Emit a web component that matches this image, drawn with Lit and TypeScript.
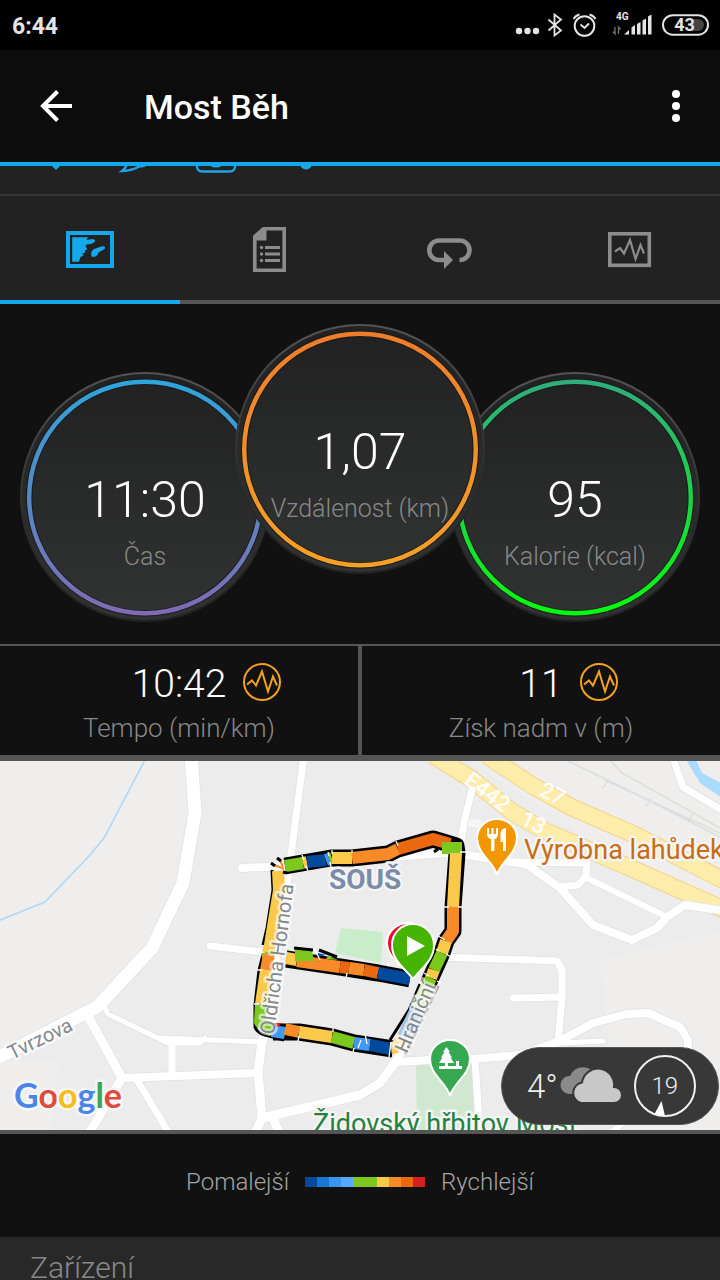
import { LitElement, html, svg, css } from "lit";
import { customElement, property, state } from "lit/decorators.js";
import { classMap } from "lit/directives/class-map.js";

const PULSE = "M0 9 L5 5 L9 10 L15 -4 L21 16 L26 1 L30 10";

@customElement("status-bar")
class StatusBar extends LitElement {
  static styles = css`
    :host {
      display: flex;
      align-items: center;
      height: 50px;
      padding: 0 11px 0 12px;
      background: #000;
      color: #e4e4e4;
      font-family: Roboto, sans-serif;
    }
    .time {
      flex: 1;
      padding-top: 3px;
      font-size: 23px;
      font-weight: 700;
      line-height: 47px;
    }
    svg { display: block; }
    .small { font: 700 10px Roboto, sans-serif; }
    .charge { font: 700 18px Roboto, sans-serif; }
  `;
  render() {
    return html`
      <span class="time">6:44</span>
      <svg width="194" height="50" viewBox="515 0 194 50" fill="none" stroke="#e4e4e4">
        <g fill="#e4e4e4" stroke="none">
          <circle cx="519" cy="31" r="3.2" /><circle cx="527.5" cy="31" r="3.2" /><circle cx="536" cy="31" r="3.2" />
        </g>
        <path d="M548.5 19.5 L561 30.5 L554.5 35.5 V14.5 L561 19.5 L548.5 30.5" stroke-width="1.8" />
        <circle cx="584.5" cy="26" r="9.8" stroke-width="2" />
        <path d="M580.5 24.5 L584.5 28 L589 23.5" stroke-width="2" />
        <path d="M573.5 19 Q575.5 15.5 579.5 14.5 M595.5 19 Q593.5 15.5 589.5 14.5" stroke-width="2" />
        <text class="small" x="616" y="20" fill="#e4e4e4" stroke="none">4G</text>
        <path d="M615 27 V34 L613 31.5 M618.5 34 V27 L620.5 29.5" stroke="#777" stroke-width="1.3" />
        <g fill="#e4e4e4" stroke="none">
          <path d="M624 34.5 L629 30 V34.5 Z" />
          <path d="M631.5 34.5 V27.5 L635 25 V34.5 Z M637 34.5 V24 L640.5 22 V34.5 Z M642.5 34.5 V20.5 L646 18.5 V34.5 Z M648 34.5 V16.5 L651.5 14.5 V34.5 Z" />
        </g>
        <path d="M692 19 H698 A6 6 0 0 1 698 31 H692 Z" fill="#444" stroke="none" />
        <rect x="663" y="15.2" width="45" height="19.5" rx="9.7" stroke-width="2" />
        <text class="charge" x="684.5" y="31" text-anchor="middle" fill="#e4e4e4" stroke="none">43</text>
      </svg>
    `;
  }
}

@customElement("top-bar")
class TopBar extends LitElement {
  @property() heading = "";
  static styles = css`
    :host {
      display: flex;
      align-items: center;
      height: 112px;
      padding: 0 16px;
      background: #0c0c0c;
      border-bottom: 4px solid #12a8ec;
      font-family: Roboto, sans-serif;
    }
    button {
      display: grid;
      place-items: center;
      height: 64px;
      padding: 0;
      border: 0;
      background: none;
    }
    .back { width: 80px; }
    .more { width: 56px; }
    h1 {
      flex: 1;
      margin: 0 0 0 48px;
      padding-top: 2px;
      color: #fff;
      font-size: 34px;
      font-weight: 500;
      line-height: 40px;
    }
  `;
  render() {
    return html`
      <button class="back" aria-label="Zpět">
        <svg width="32" height="32" viewBox="0 0 32 32" fill="none" stroke="#fff" stroke-width="4">
          <path d="M32 16 H3 M17.5 1.5 L3 16 L17.5 30.5" />
        </svg>
      </button>
      <h1>${this.heading}</h1>
      <button class="more" aria-label="Další možnosti">
        <svg width="8" height="32" viewBox="0 0 8 32" fill="#fff">
          <circle cx="4" cy="4" r="4" /><circle cx="4" cy="16" r="4" /><circle cx="4" cy="28" r="4" />
        </svg>
      </button>
    `;
  }
}

@customElement("action-strip")
class ActionStrip extends LitElement {
  static styles = css`
    :host {
      display: flex;
      align-items: flex-end;
      gap: 30px;
      height: 28px;
      padding-left: 31px;
      overflow: hidden;
      background: #222;
      border-bottom: 2px solid #373737;
    }
    button {
      width: 50px;
      height: 48px;
      padding: 0;
      border: 0;
      background: none;
      color: #1fa4e6;
      flex: none;
      margin-bottom: 20px;
    }
    svg { display: block; }
  `;
  render() {
    return html`
      <button aria-label="To se mi líbí">
        <svg width="50" height="48" viewBox="0 0 50 48" fill="currentColor">
          <path d="M25 44 L8 27 C-1 12 18 4 25 16 C32 4 51 12 42 27 Z" />
        </svg>
      </button>
      <button aria-label="Komentář">
        <svg width="50" height="48" viewBox="0 0 50 48" fill="none" stroke="currentColor" stroke-width="2.4">
          <path d="M11 45 Q16 41 16 37 C2 28 10 12 26 12 C48 12 50 39 28 40.500 Q22 44.500 11 45 Z" />
        </svg>
      </button>
      <button aria-label="Fotografie">
        <svg width="50" height="48" viewBox="0 0 50 48" fill="none" stroke="currentColor" stroke-width="2.4">
          <rect x="6" y="16" width="38" height="29.5" rx="5" />
          <circle cx="25" cy="30.5" r="9.5" stroke-width="3" />
        </svg>
      </button>
      <button aria-label="Více">
        <svg width="50" height="48" viewBox="0 0 50 48" fill="currentColor">
          <circle cx="35" cy="37.5" r="6" />
        </svg>
      </button>
    `;
  }
}

@customElement("tab-strip")
class TabStrip extends LitElement {
  @state() active = 0;
  static styles = css`
    :host {
      display: grid;
      grid-template-columns: repeat(4, 1fr);
      background: #222;
    }
    button {
      display: grid;
      place-items: center;
      height: 108px;
      padding: 0;
      border: 0;
      border-bottom: 4px solid #555;
      background: none;
      color: #8c8c8c;
    }
    .on {
      color: #16a8ec;
      border-color: #16a8ec;
    }
  `;
  icons = [
    {
      name: "Mapa",
      art: svg`<rect x="8" y="15" width="44" height="33" fill="none" stroke="currentColor" stroke-width="4"/>
        <path fill="currentColor" d="M12.2 19.3 H28 L26.5 22 L32.5 21 Q36.5 21.5 34.5 24 Q32 26.5 27.5 26.2 Q24 27 27 30.5 Q27.5 32 25 32 Q26 35.5 22 35.5 L23.5 37.5 L20.5 39 L19 43.8 H12.2 Z M31.5 38.5 Q30 31.5 36.5 30.3 L42 28.3 Q46.5 28.3 44.5 31 L38.5 34.5 Q37 39 34 39 Z"/>`,
    },
    {
      name: "Podrobnosti",
      art: svg`<path fill="none" stroke="currentColor" stroke-width="3.6" d="M14.8 18.5 L23.5 10.8 H44.2 V52.2 H14.8 Z"/>
        <path fill="currentColor" d="M14 20 L24 10 H26.5 V22.5 H14 Z"/>
        <g fill="currentColor"><circle cx="21.5" cy="29.5" r="1.7"/><circle cx="21.5" cy="36" r="1.7"/><circle cx="21.5" cy="42.5" r="1.7"/>
        <path d="M25 28 H40 V31 H25 Z M25 34.5 H40 V37.5 H25 Z M25 41 H40 V44 H25 Z"/></g>`,
    },
    {
      name: "Kola",
      art: svg`<path fill="none" stroke="currentColor" stroke-width="4.6" d="M25 42 H19 A9.6 9.6 0 0 1 19 22.5 H40 A9.6 9.6 0 0 1 39.5 42"/>
        <path fill="currentColor" d="M24 33 L33 42 L24 51 Z"/>`,
    },
    {
      name: "Grafy",
      art: svg`<rect x="9.8" y="15.8" width="39.5" height="31.5" fill="none" stroke="currentColor" stroke-width="3.6"/>
        <path fill="none" stroke="currentColor" stroke-width="2.2" d="M15 33.5 L20 30 L24 35.5 L30 22 L35.5 41 L40.5 27 L44 35.5"/>`,
    },
  ];
  render() {
    return this.icons.map(
      (icon, i) => html`
        <button
          class=${classMap({ on: i === this.active })}
          aria-label=${icon.name}
          @click=${() => (this.active = i)}
        >
          <svg width="60" height="60" viewBox="0 0 60 60">${icon.art}</svg>
        </button>
      `
    );
  }
}

@customElement("ring-gauge")
class RingGauge extends LitElement {
  @property() value = "";
  @property() label = "";
  @property() from = "";
  @property() to = "";
  static styles = css`
    :host {
      display: grid;
      width: 250px;
      height: 250px;
      flex: none;
      font-family: Roboto, sans-serif;
      font-weight: 300;
      text-align: center;
    }
    svg, .text { grid-area: 1 / 1; }
    .text {
      padding-top: 96px;
      white-space: nowrap;
    }
    .value {
      color: #fff;
      font-size: 50px;
      line-height: 64px;
    }
    .label {
      color: #888;
      font-size: 25px;
      line-height: 50px;
    }
  `;
  render() {
    return html`
      <svg width="250" height="250" viewBox="0 0 250 250">
        <defs>
          <linearGradient id="face" x1="0" y1="0" x2="0" y2="1">
            <stop offset="0" stop-color="#212121" /><stop offset="1" stop-color="#313333" />
          </linearGradient>
          <linearGradient id="rim" x1="0" y1="0" x2="0" y2="1">
            <stop offset="0" stop-color="#535353" /><stop offset="0.6" stop-color="#2c2c2c" /><stop offset="1" stop-color="#222" />
          </linearGradient>
          <linearGradient id="ring" x1="0" y1="0" x2="0" y2="1">
            <stop offset="0" stop-color=${this.from} /><stop offset="1" stop-color=${this.to} />
          </linearGradient>
        </defs>
        <circle cx="125" cy="125" r="124" fill="url(#face)" stroke="url(#rim)" stroke-width="2" />
        <circle cx="125" cy="125.5" r="115.8" fill="none" stroke="#161616" stroke-opacity="0.7" stroke-width="6.5" />
        <circle cx="125" cy="125.5" r="115.8" fill="none" stroke="url(#ring)" stroke-width="4.4" />
      </svg>
      <div class="text">
        <div class="value">${this.value}</div>
        <div class="label">${this.label}</div>
      </div>
    `;
  }
}

@customElement("stat-cell")
class StatCell extends LitElement {
  @property() value = "";
  @property() label = "";
  static styles = css`
    :host {
      display: block;
      padding: 12px 0 9px;
      background: #111;
      color: #fff;
      font-family: Roboto, sans-serif;
      font-weight: 300;
      text-align: center;
    }
    .row {
      display: grid;
      grid-template-columns: 1fr auto 1fr;
      column-gap: 17px;
      align-items: center;
      font-size: 39px;
      line-height: 52px;
    }
    .value { grid-column: 2; }
    button {
      width: 38px;
      height: 38px;
      margin-bottom: 4px;
      padding: 0;
      border: 0;
      background: none;
    }
    svg { display: block; }
    .label {
      color: #888;
      font-size: 26px;
      line-height: 36px;
    }
  `;
  render() {
    return html`
      <div class="row">
        <span class="value">${this.value}</span>
        <button aria-label="Graf: ${this.label}">
          <svg width="38" height="38" viewBox="0 0 38 38" fill="none" stroke="#f5a01e" stroke-width="2">
            <circle cx="19" cy="19" r="18" />
            <path transform="translate(4 12.5)" d=${PULSE} />
          </svg>
        </button>
      </div>
      <div class="label">${this.label}</div>
    `;
  }
}

const BLUE = "#004a9e";
const SKY = "#4299f5";
const GREEN = "#7cc81e";
const YELLOW = "#fac94a";
const ORANGE = "#f98a28";
const RUST = "#ea6910";
const RED = "#d42020";

const ROADS: [number, string][] = [
  [13, "M191 755 L195 813 L183 883 L152 948 L97 1007 L-5 1059"],
  [7, "M304 755 L291 855 L285 900 L266 1030"],
  [8, "M242 868 L285 866 L442 853 L467 855 L530 865"],
  [7, "M210 946 L263 952"],
  [5, "M105 1008 L108 1014 L168 1043 L200 1043 L205 1038 M160 1038 L262 1042"],
  [7, "M172 1045 L172 1073"],
  [9, "M88 1016 L122 1078 L88 1135"],
  [8, "M122 1078 L258 1073"],
  [7, "M137 1080 L170 1135"],
  [9, "M266 1030 L262 1042 L258 1072 L262 1118 L254 1135 M273 1118 L280 1135"],
  [9, "M262 1118 L360 1095 L380 1083 L397 1060 L432 985"],
  [8, "M397 1062 L430 1060 L473 1059 L520 1055 L560 1041"],
  [5, "M560 1043 L603 1041"],
  [7, "M475 1060 L480 1135"],
  [7, "M558 1043 L562 997 L562 970 L557 961 L440 957"],
  [7, "M513 998 L562 997"],
  [8, "M560 1041 L593 1023 L627 1014 L648 1013 L680 1027 L688 1040 V1060"],
  [7, "M472 790 L464 822 L461 842"],
  [8, "M530 867 L560 888 L593 925 L632 940 L657 928 L667 917 L685 905 L725 911"],
  [7, "M560 887 L578 885 L586 876 L587 863 L513 862"],
  [6, "M585 877 L667 917"],
  [7, "M672 755 L683 787 L725 812"],
  [6, "M612 1132 L624 1122"],
];

const TRACK: [string, string][] = [
  [YELLOW, "M278 871 L279 890 L270 945 L268 953"],
  [GREEN, "M267 952 L268 957"],
  [ORANGE, "M269 954 L266 970"],
  [YELLOW, "M266 970 L261 1004"],
  [GREEN, "M261 1004 L260 1022 L273 1031"],
  [SKY, "M272 1031 L285 1033"],
  [ORANGE, "M285 1029 L299 1032"],
  [YELLOW, "M299 1032 L332 1037"],
  [GREEN, "M332 1037 L354 1043"],
  [SKY, "M354 1043 L370 1045"],
  [BLUE, "M370 1045 L391 1049"],
  [YELLOW, "M391 1048 L398 1047"],
  [GREEN, "M285 866 L303 863"],
  [YELLOW, "M303 863 L307 862"],
  [BLUE, "M307 862 L326 860"],
  [SKY, "M326 860 L329 859"],
  [GREEN, "M329 859 L332 858"],
  [YELLOW, "M332 858 L352 858"],
  [ORANGE, "M352 858 L388 854 L398 849"],
  [RUST, "M398 849 L433 839 L450 844"],
  [GREEN, "M442 848 L462 848"],
  [YELLOW, "M456 853 L453 907"],
  [ORANGE, "M453 907 L453 931 L446 941"],
  [YELLOW, "M446 941 L442 953"],
  [GREEN, "M442 953 L434 970"],
  [YELLOW, "M434 970 L431 978"],
  [GREEN, "M431 978 L428 984"],
  [YELLOW, "M286 958 L297 960"],
  [ORANGE, "M297 961 L340 967"],
  [RUST, "M340 967 L349 968"],
  [ORANGE, "M349 968 L364 970"],
  [RUST, "M364 970 L378 973"],
  [BLUE, "M378 973 L410 979"],
];

const OUTLINE =
  "M285 866 L331 858 L352 858 L388 854 L398 849 L433 839 L456 846 L457 853 L453 907 L453 931 L446 941 L442 953 L428 984 " +
  "M286 959 L340 967 L378 973 L410 979 M273 1032 L299 1032 L332 1037 L354 1043 L393 1049";

const TICKS =
  "M302 855 L304 860 M306 866 L308 871 M328 852 L329 856 M332 850 V854 M330 862 L331 867 M352 850 V853 M396 841 L398 846 " +
  "M460 852 H468 M444 907 H449 M458 907 H462 M438 936 L445 940 M446 954 L451 957 M436 949 L439 951 M424 973 L429 976 M437 981 L441 983 " +
  "M257 970 H262 M254 1004 H259 M314 948 L320 960 M347 973 L346 978 M388 962 L389 966 M333 1028 L333 1032 M353 1052 L354 1048 M358 1048 L361 1040 " +
  "M365 1034 L367 1044 M299 1036 L298 1041 M391 1042 L389 1057";

@customElement("route-map")
class RouteMap extends LitElement {
  static styles = css`
    :host {
      display: block;
      position: relative;
      border-top: 6px solid #555;
      border-bottom: 4px solid #555;
      background: #ececec;
      font-family: Roboto, sans-serif;
      font-weight: 400;
    }
    .map {
      display: block;
      width: 100%;
      height: 369px;
    }
    text { paint-order: stroke; stroke-linejoin: round; }
    .place { font-size: 27px; stroke: #f4f4f4; stroke-width: 5px; }
    .district { font-size: 28px; font-weight: 700; fill: #7b8ca8; stroke: #f4f4f4; stroke-width: 5px; }
    .street { font-size: 20px; fill: #84888c; stroke: #fff; stroke-opacity: 0.6; stroke-width: 5px; }
    .shield { font-size: 22px; font-weight: 500; fill: #fff; }
    .brand { font: 700 34px Lato, sans-serif; stroke: #f6f6f6; stroke-width: 5px; }
    .weather {
      position: absolute;
      right: 1px;
      bottom: 5px;
      display: flex;
      align-items: center;
      box-sizing: border-box;
      width: 218px;
      height: 78px;
      padding: 0 20px 0 25px;
      border: 1px solid #555;
      border-radius: 39px;
      background: #383838;
      color: #eee;
      font-size: 33px;
      font-weight: 300;
    }
    .clouds { margin: 0 12px 0 2px; flex: none; }
    .wind {
      display: grid;
      place-items: center;
      flex: none;
      width: 62px;
      height: 62px;
    }
    .wind svg, .wind span { grid-area: 1 / 1; }
    .speed { font-size: 24px; }
  `;
  render() {
    return html`
      <svg class="map" viewBox="0 761 720 369" preserveAspectRatio="xMidYMid slice" role="img" aria-label="Mapa trasy">
        <path d="M0 755 H195 L183 883 L152 948 L97 1007 L0 1057 Z M0 1060 L60 1060 L50 1135 H0 Z M460 755 H725 V910 L630 865 Z M620 1135 L600 960 L725 930 V1135 Z" fill="#efeeec" />
        <path d="M341 928 L383 932 L381 963 L335 953 Z" fill="#c9edcb" />
        <path d="M416 1065 H472 L474 1130 H417 Z" fill="#cfe8cf" />
        <path d="M685 758 L700 783 L725 800 V785 L702 773 L695 758 Z" fill="#aadaff" />
        <path d="M146 758 L104 838 L90 855 L45 902 L-2 921" fill="none" stroke="#acd8fa" stroke-width="1.6" />
        <g fill="none" stroke="#dcdddd" stroke-width="1.5">
          <path d="M562 758 L640 796 L722 838 M608 758 L622 773 L722 829 M605 780 L722 834" />
          <path d="M603 788 L608 780 M646 807 L651 798 M688 822 L693 813" />
        </g>
        <g fill="none" stroke-linejoin="round">
          <path d="M433 755 L473 780 L512 812 L545 831 L633 869 L725 910 M486 755 L533 786 L573 808 L633 834 L725 881" stroke="#f4d38d" stroke-width="18" />
          <path d="M433 755 L473 780 L512 812 L545 831 L633 869 L725 910 M486 755 L533 786 L573 808 L633 834 L725 881" stroke="#feecaa" stroke-width="16" />
        </g>
        <path d="M466 822 L482 824" stroke="#f5f6f9" stroke-width="8" />
        <g fill="none" stroke="#e0e1e3" stroke-linecap="round" stroke-linejoin="round">
          ${ROADS.map(([w, d]) => svg`<path d=${d} stroke-width=${w + 1.5}/>`)}
        </g>
        <g fill="none" stroke="#fff" stroke-linecap="round" stroke-linejoin="round">
          ${ROADS.map(([w, d]) => svg`<path d=${d} stroke-width=${w}/>`)}
        </g>

        <path d=${OUTLINE} fill="none" stroke="#000" stroke-width="17" stroke-linejoin="round" />
        <path d="M272 870 L273 890 L267 928 L263 945 M263 955 L259 970 L255 1005 V1027 Q257 1033 265 1035 L284 1040 M281 1025 L286 1027 M420 984 L409 1010 L390 1040" fill="none" stroke="#000" stroke-width="3" />
        <g fill="none" stroke-width="12" stroke-linejoin="round">
          ${TRACK.map(([c, d]) => svg`<path d=${d} stroke=${c}/>`)}
        </g>
        <path d="M295 949 L312 951 L314 961 L295 961 Z" fill=${GREEN} />
        <path d="M294 948 L313 950 M319 950 L337 957" fill="none" stroke="#000" stroke-width="3" />
        <path d="M318 953 L326 955 L318 957 Z" fill=${BLUE} />
        <path d="M328 956 L338 960 L326 959 Z" fill=${GREEN} />
        <path d="M273 1023 H282 L278 1027 H273 Z" fill=${RED} />
        <path d="M428 984 L417 1008" stroke="#cfe6ae" stroke-width="13" />
        <path d="M417 1008 L403 1038" stroke="#a9c4e2" stroke-width="13" />
        <path d="M403 1038 L396 1048" stroke="#fbe2a8" stroke-width="13" />
        <path d="M438 986 L405 1054" stroke="#8c8c8c" stroke-width="3" stroke-dasharray="9 3" />
        <path d="M284 869 L272 864 M283 867 L279 858" stroke=${ORANGE} stroke-width="2" />
        <path d="M271 863 L275 866 M277 858 L281 861 M283 872 L287 873 M434 852 L438 849" stroke="#000" stroke-width="3" />
        <path d=${TICKS} fill="none" stroke="#fff" stroke-width="1.3" />

        <text class="shield" transform="translate(463 783) rotate(37)">E442</text>
        <text class="shield" transform="translate(519 824) rotate(26)">13</text>
        <text class="shield" transform="translate(538 795) rotate(26)">27</text>
        <text class="street" transform="translate(12 1060) rotate(-26)">Tvrzova</text>
        <text class="street" transform="translate(274 1035) rotate(-82.5)">Oldřicha Hornofa</text>
        <text class="street" transform="translate(407 1054) rotate(-67)">Hraniční</text>
        <text class="district" x="329" y="889">SOUŠ</text>
        <text class="place" x="524" y="859" fill="#c96d14">Výrobna lahůdek</text>
        <text class="place" x="313" y="1133" fill="#23813f">Židovský hřbitov Most</text>
        <text class="brand" x="14" y="1108"><tspan fill="#4a86e8">G</tspan><tspan fill="#e04a3b">o</tspan><tspan fill="#f5bd16">o</tspan><tspan fill="#4a86e8">g</tspan><tspan fill="#3aa757">l</tspan><tspan fill="#e04a3b">e</tspan></text>

        <g stroke="#fff" stroke-width="2">
          <path d="M497 875 C494 862 477 854 477 838 A20 19 0 0 1 517 838 C517 854 500 862 497 875 Z" fill="#f39700" />
          <path d="M450 1096 C447 1083 430 1075 430 1059 A20 19 0 0 1 470 1059 C470 1075 453 1083 450 1096 Z" fill="#36a852" />
          <path d="M413 978 C405 968 387 958 387 943 A21 20 0 0 1 429 943 Z" fill="#f0062f" />
          <path d="M413 979 C405 968 392 961 392 945 A21 21 0 0 1 434 945 C434 961 421 968 413 979 Z" fill="#46b400" />
        </g>
        <path d="M407 936 L425 946 L407 956 Z" fill="#fff" />
        <path d="M486 828 H488 V834 H490.5 V828 H492.5 V834 H495 V828 H497 V835 Q496.5 838 493.5 839 V851 H490 V839 Q486.5 838 486 835 Z M505 828 V851 H502 V842 H499.5 V833 Q500 828.5 505 828 Z" fill="#fff" transform="translate(1 0)" />
        <path d="M446.5 1047 L450 1052 H448.5 L452 1057.5 H450.5 L454 1063 H448 V1066 H456 V1061 H459 V1066 H462 V1069 H439 V1066 H445 V1063 H439 L442.5 1057.5 H441 L444.5 1052 H443 Z" fill="#fff" />
      </svg>
      <div class="weather">
        <span>4°</span>
        <svg class="clouds" width="62" height="38" viewBox="0 0 62 38">
          <path d="M9 27 A9 9 0 0 1 10 9 A14 14 0 0 1 36 9 V27 Z" fill="#8a8a8a" />
          <path d="M21 36 A10.5 10.5 0 0 1 22 15.5 A15 15 0 0 1 54 20 A8 8 0 0 1 54 36 Z" fill="#c8c8c8" stroke="#383838" stroke-width="2" />
        </svg>
        <div class="wind">
          <svg width="62" height="62" viewBox="0 0 62 62">
            <circle cx="31" cy="31" r="30" fill="none" stroke="#f2f2f2" stroke-width="2" />
            <path d="M27.5 46 L31 61 L20.5 59 Z" fill="#fff" />
          </svg>
          <span class="speed">19</span>
        </div>
      </div>
    `;
  }
}

@customElement("app-root")
class AppRoot extends LitElement {
  static styles = css`
    :host {
      display: flex;
      flex-direction: column;
      height: 100vh;
      overflow: hidden;
      background: #111;
      font-family: Roboto, sans-serif;
      font-weight: 300;
    }
    status-bar, top-bar { flex: none; }
    main {
      flex: 1;
      min-height: 0;
      overflow: hidden;
    }
    .gauges {
      display: flex;
      justify-content: center;
      align-items: flex-end;
      padding: 20px 0 22px;
    }
    .side { z-index: 0; }
    .center {
      z-index: 1;
      margin: 0 -35px 48px;
    }
    .stats {
      display: grid;
      grid-template-columns: 1fr 1fr;
      gap: 4px;
      background: #555;
      border-top: 2px solid #555;
    }
    .legend {
      display: flex;
      justify-content: center;
      align-items: center;
      gap: 16px;
      height: 103px;
      padding-bottom: 8px;
      box-sizing: border-box;
      color: #a4a4a4;
      font-size: 24px;
      line-height: 30px;
    }
    .scale {
      display: flex;
      height: 10px;
    }
    .step { width: 12px; }
    h2 {
      margin: 0;
      padding: 12px 30px;
      background: #282828;
      color: #888;
      font-size: 30px;
      font-weight: 300;
      line-height: 38px;
    }
  `;
  scale = [BLUE, "#1b76d2", "#3c94f2", "#55a9ff", GREEN, GREEN, YELLOW, ORANGE, RUST, RED];
  render() {
    return html`
      <status-bar></status-bar>
      <top-bar heading="Most Běh"></top-bar>
      <main>
        <action-strip></action-strip>
        <tab-strip></tab-strip>
        <section class="gauges">
          <ring-gauge class="side" value="11:30" label="Čas" from="#2fa4dc" to="#7f6bb3"></ring-gauge>
          <ring-gauge class="center" value="1,07" label="Vzdálenost (km)" from="#ee7d2b" to="#f5a027"></ring-gauge>
          <ring-gauge class="side" value="95" label="Kalorie (kcal)" from="#2fae7c" to="#06fa0c"></ring-gauge>
        </section>
        <section class="stats">
          <stat-cell value="10:42" label="Tempo (min/km)"></stat-cell>
          <stat-cell value="11" label="Získ nadm v (m)"></stat-cell>
        </section>
        <route-map></route-map>
        <div class="legend">
          <span>Pomalejší</span>
          <div class="scale">
            ${this.scale.map((c) => html`<div class="step" style="background:${c}"></div>`)}
          </div>
          <span>Rychlejší</span>
        </div>
        <h2>Zařízení</h2>
      </main>
    `;
  }
}
